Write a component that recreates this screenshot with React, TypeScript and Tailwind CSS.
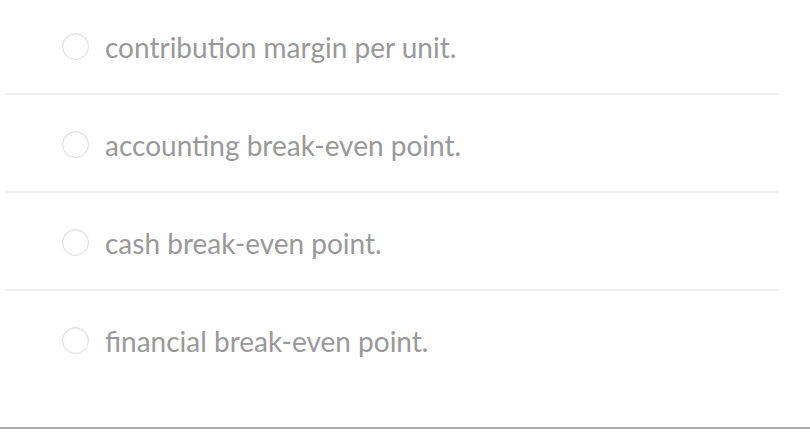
import React from "react";

const options = [
  "contribution margin per unit.",
  "accounting break-even point.",
  "cash break-even point.",
  "financial break-even point.",
];

export default function App() {
  return (
    <div className="w-[810px] h-[434px] bg-white flex flex-col" style={{ fontFamily: "Lato, 'Open Sans', sans-serif" }}>
      <div className="flex flex-col px-[5px] pr-[31px]">
        {options.map((o, i) => (
          <div key={i} className="flex flex-col">
            <div className="h-[93px] flex items-center pl-[57px]">
              <span className="w-[27px] h-[27px] rounded-full border border-[#dcdcdc] bg-white shadow-[inset_0_1px_2px_rgba(0,0,0,0.08)] shrink-0"></span>
              <span className="ml-[16px] text-[28px] text-[#999999] leading-none">{o}</span>
            </div>
            {i < options.length - 1 && <div className="h-[2px] bg-[#eeeeee] mb-[3px]"></div>}
          </div>
        ))}
      </div>
      <div className="flex-1"></div>
      <div className="h-[2px] bg-[#a8a8a8] mb-[5px]"></div>
    </div>
  );
}
